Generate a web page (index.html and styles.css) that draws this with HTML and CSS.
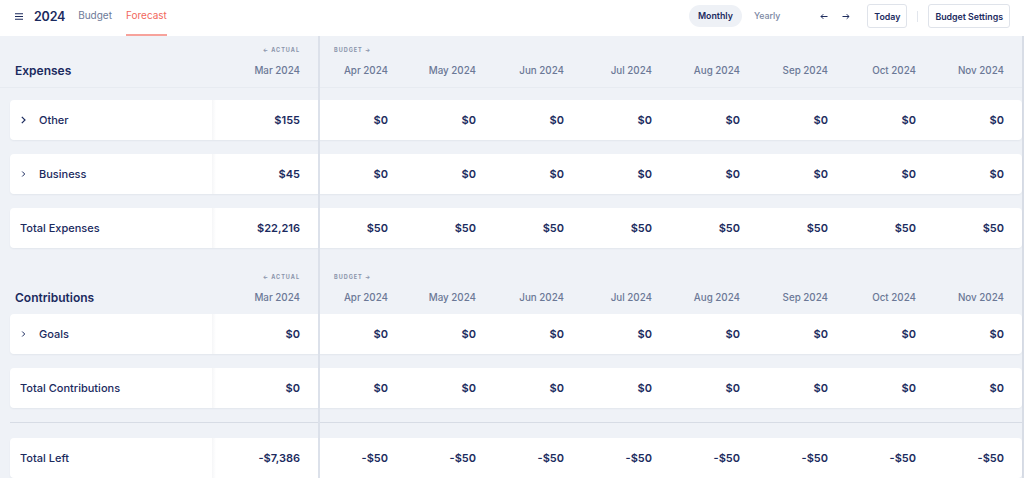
FILE: index.html
```html
<!DOCTYPE html>
<html>
<head>
<meta charset="utf-8">
<link rel="stylesheet" href="styles.css">
</head>
<body>
<header class="topbar">
  <div class="tb-left">
    <svg class="burger" width="8" height="7" viewBox="0 0 8 7"><path d="M0 0.75h8M0 3.5h8M0 6.25h8" stroke="#1d2b5c" stroke-width="1.2"/></svg>
    <span class="year">2024</span>
    <a class="tab">Budget</a>
    <a class="tab active">Forecast</a>
  </div>
  <div class="tb-right">
    <span class="pill on">Monthly</span>
    <span class="pill">Yearly</span>
    <span class="arrows">
      <svg width="8" height="7" viewBox="0 0 8 7"><path d="M7.5 3.5H1M3.3 1.2L1 3.5 3.3 5.8" fill="none" stroke="#1d2b5c" stroke-width="1"/></svg>
      <svg width="8" height="7" viewBox="0 0 8 7"><path d="M0.5 3.5H7M4.7 1.2L7 3.5 4.7 5.8" fill="none" stroke="#1d2b5c" stroke-width="1"/></svg>
    </span>
    <button class="btn">Today</button>
    <span class="sep"></span>
    <button class="btn">Budget Settings</button>
  </div>
</header>
<main class="board">
  <section class="section first">
    <div class="grid head">
      <div class="name-h">Expenses</div>
      <div class="mh"><span class="tag">&#8592; ACTUAL</span><span>Mar 2024</span></div>
      <div class="mh budget"><span class="tag">BUDGET &#8594;</span><span>Apr 2024</span></div>
      <div class="mh"><span>May 2024</span></div>
      <div class="mh"><span>Jun 2024</span></div>
      <div class="mh"><span>Jul 2024</span></div>
      <div class="mh"><span>Aug 2024</span></div>
      <div class="mh"><span>Sep 2024</span></div>
      <div class="mh"><span>Oct 2024</span></div>
      <div class="mh"><span>Nov 2024</span></div>
    </div>
    <div class="rows">
      <div class="grid card">
        <div class="name"><svg class="chev" width="5" height="8" viewBox="0 0 5 8"><path d="M0.8 0.8L4 4 0.8 7.2" fill="none" stroke="#1b2a5e" stroke-width="1.2"/></svg>Other</div>
        <div class="v">$155</div><div class="v">$0</div><div class="v">$0</div><div class="v">$0</div><div class="v">$0</div><div class="v">$0</div><div class="v">$0</div><div class="v">$0</div><div class="v">$0</div>
      </div>
      <div class="grid card">
        <div class="name"><svg class="chev" width="5" height="8" viewBox="0 0 5 8"><path d="M1.2 1.5L3.7 4 1.2 6.5" fill="none" stroke="#1b2a5e" stroke-width="1"/></svg>Business</div>
        <div class="v">$45</div><div class="v">$0</div><div class="v">$0</div><div class="v">$0</div><div class="v">$0</div><div class="v">$0</div><div class="v">$0</div><div class="v">$0</div><div class="v">$0</div>
      </div>
      <div class="grid card">
        <div class="name">Total Expenses</div>
        <div class="v">$22,216</div><div class="v">$50</div><div class="v">$50</div><div class="v">$50</div><div class="v">$50</div><div class="v">$50</div><div class="v">$50</div><div class="v">$50</div><div class="v">$50</div>
      </div>
    </div>
  </section>
  <section class="section second">
    <div class="grid head">
      <div class="name-h">Contributions</div>
      <div class="mh"><span class="tag">&#8592; ACTUAL</span><span>Mar 2024</span></div>
      <div class="mh budget"><span class="tag">BUDGET &#8594;</span><span>Apr 2024</span></div>
      <div class="mh"><span>May 2024</span></div>
      <div class="mh"><span>Jun 2024</span></div>
      <div class="mh"><span>Jul 2024</span></div>
      <div class="mh"><span>Aug 2024</span></div>
      <div class="mh"><span>Sep 2024</span></div>
      <div class="mh"><span>Oct 2024</span></div>
      <div class="mh"><span>Nov 2024</span></div>
    </div>
    <div class="rows">
      <div class="grid card">
        <div class="name"><svg class="chev" width="5" height="8" viewBox="0 0 5 8"><path d="M1.2 1.5L3.7 4 1.2 6.5" fill="none" stroke="#1b2a5e" stroke-width="1"/></svg>Goals</div>
        <div class="v">$0</div><div class="v">$0</div><div class="v">$0</div><div class="v">$0</div><div class="v">$0</div><div class="v">$0</div><div class="v">$0</div><div class="v">$0</div><div class="v">$0</div>
      </div>
      <div class="grid card">
        <div class="name">Total Contributions</div>
        <div class="v">$0</div><div class="v">$0</div><div class="v">$0</div><div class="v">$0</div><div class="v">$0</div><div class="v">$0</div><div class="v">$0</div><div class="v">$0</div><div class="v">$0</div>
      </div>
    </div>
  </section>
  <div class="divider"></div>
  <section class="section last">
    <div class="grid card">
      <div class="name">Total Left</div>
      <div class="v">-$7,386</div><div class="v">-$50</div><div class="v">-$50</div><div class="v">-$50</div><div class="v">-$50</div><div class="v">-$50</div><div class="v">-$50</div><div class="v">-$50</div><div class="v">-$50</div>
    </div>
  </section>
</main>
</body>
</html>
```
FILE: styles.css
```css
* { box-sizing: border-box; }
html, body { margin: 0; padding: 0; }
body {
  font-family: Inter, "Noto Sans", sans-serif;
  color: #1b2a5e;
  background: #eff2f7;
  width: 1024px;
  height: 478px;
  overflow: hidden;
}
.topbar {
  height: 36px;
  background: #fff;
  display: flex;
  align-items: center;
  justify-content: space-between;
  padding: 0 14px 0 15px;
}
.tb-left { display: flex; align-items: center; height: 36px; }
.burger { margin-right: 11px; margin-bottom: 3px; }
.year { font-size: 12.5px; font-weight: 600; color: #1b2a5e; margin-right: 13px; letter-spacing: -0.2px; margin-bottom: 3px; }
.tab {
  font-size: 10px;
  color: #6d7a98;
  margin-right: 14px;
  height: 36px;
  line-height: 30px;
  border-bottom: 2px solid transparent;
}
.tab.active { color: #f2675c; border-bottom-color: #f7a29b; }
.tb-right { display: flex; align-items: center; padding-bottom: 4px; }
.pill {
  font-size: 8.8px;
  height: 22px;
  line-height: 22px;
  padding: 0 9px;
  border-radius: 11px;
  color: #7a86a2;
  font-weight: 500;
}
.pill.on { background: #eef1f6; color: #1b2a5e; font-weight: 600; }
.pill + .pill { padding-left: 12px; }
.arrows { display: flex; gap: 14px; margin: 0 17px 0 31px; }
.btn {
  font-family: inherit;
  font-size: 8.8px;
  font-weight: 600;
  color: #1b2a5e;
  background: #fff;
  border: 1px solid #dfe3ea;
  border-radius: 3px;
  height: 24px;
  padding: 0 6px;
}
.sep { width: 1px; height: 11px; background: #e2e6ed; margin: 0 10px; }

.board {
  position: relative;
  height: 442px;
  border-right: 2px solid #d8dde6;
}
.board::before {
  content: "";
  position: absolute;
  left: 318px;
  top: 0;
  bottom: 0;
  width: 2px;
  background: #dce1ea;
  z-index: 2;
}
.grid {
  display: grid;
  grid-template-columns: 202px 106px repeat(8, 88px);
  margin-left: 10px;
}
.head { height: 51px; align-items: end; }
.first .head {
  margin-left: 0;
  grid-template-columns: 212px 106px repeat(8, 88px);
  box-shadow: 0 1px 0 #e7ebf1;
  background: #eff2f7;
}
.first .head .name-h { padding-left: 15px; }
.second .head .name-h { padding-left: 5px; }
.name-h { font-size: 12px; font-weight: 600; padding-bottom: 9px; }
.mh {
  display: flex;
  flex-direction: column;
  align-items: flex-end;
  padding-right: 18px;
  padding-bottom: 11px;
  font-size: 9.8px;
  color: #6b7896;
  font-weight: 500;
}
.mh.budget { align-items: stretch; }
.mh.budget .tag { padding-left: 16px; }
.mh.budget span:last-child { text-align: right; }
.tag {
  font-size: 5.5px;
  font-weight: 700;
  letter-spacing: 1px;
  color: #8a94ab;
  margin-bottom: 12px;
}
.rows { display: flex; flex-direction: column; gap: 14px; }
.first .rows { margin-top: 13px; }
.second { margin-top: 16px; }
.second .head { height: 50px; }
.card {
  background: #fff;
  height: 40px;
  border-radius: 4px;
  align-items: center;
  box-shadow: 0 1px 2px rgba(30, 45, 90, 0.06);
}
.name {
  font-size: 11px;
  font-weight: 500;
  padding-left: 10px;
  display: flex;
  align-items: center;
  height: 40px;
  position: relative;
}
.name::after {
  content: "";
  position: absolute;
  right: -4px;
  top: 0;
  bottom: 0;
  width: 4px;
  background: linear-gradient(to right, rgba(30,45,90,0.045), rgba(30,45,90,0));
}
.chev { margin: 0 13px 0 1px; }
.v {
  text-align: right;
  padding-right: 18px;
  font-size: 11px;
  font-weight: 600;
}
.divider { height: 1px; background: #d7dce5; margin: 14px 0 15px 10px; }
```
